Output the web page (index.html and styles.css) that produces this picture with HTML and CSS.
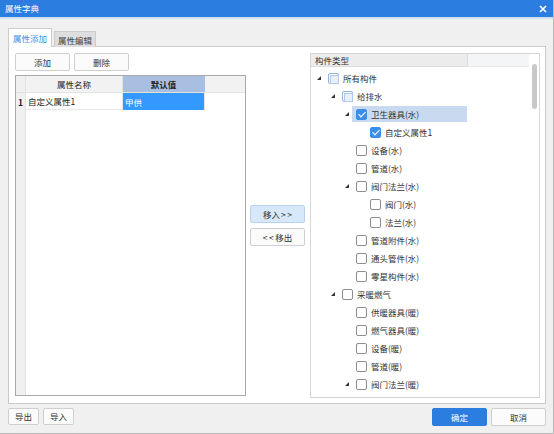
FILE: index.html
```html
<!DOCTYPE html>
<html>
<head>
<meta charset="utf-8">
<link rel="stylesheet" href="styles.css">
</head>
<body>
<div class="win">
  <div class="titlebar">
    <span class="title">属性字典</span>
    <svg class="close" width="8" height="8" viewBox="0 0 8 8"><path d="M1 1L7 7M7 1L1 7" stroke="#fff" stroke-width="1.6"/></svg>
  </div>
  <div class="main">
    <div class="tabs">
      <div class="tab active">属性添加</div>
      <div class="tab">属性编辑</div>
    </div>
    <div class="panel">
      <div class="leftcol">
        <div class="btnrow">
          <button class="btn w55">添加</button>
          <button class="btn w55">删除</button>
        </div>
        <div class="grid">
          <div class="grow ghead">
            <div class="c rn"></div>
            <div class="c name">属性名称</div>
            <div class="c def sel">默认值</div>
            <div class="c rest"></div>
          </div>
          <div class="grow gbody">
            <div class="c rn b">1</div>
            <div class="c name left">自定义属性1</div>
            <div class="c def val">甲供</div>
          </div>
          <div class="gfill"><div class="rnfill"></div></div>
        </div>
      </div>
      <div class="midcol">
        <button class="btn w55 blue-lite">移入<span class="arr r">&gt;&gt;</span></button>
        <button class="btn w55"><span class="arr l">&lt;&lt;</span>移出</button>
      </div>
      <div class="tree">
        <div class="treecontent">
          <div class="thead"><span class="thcell">构件类型</span><span class="threst"></span></div>
          <div class="row l0"><i class="tg"></i><i class="cb part"></i><span>所有构件</span></div>
          <div class="row l1"><i class="tg"></i><i class="cb part"></i><span>给排水</span></div>
          <div class="row l2"><i class="tg"></i><span class="hl"><i class="cb on"></i><span>卫生器具(水)</span></span></div>
          <div class="row l3"><i class="tg none"></i><i class="cb on"></i><span>自定义属性1</span></div>
          <div class="row l2"><i class="tg none"></i><i class="cb"></i><span>设备(水)</span></div>
          <div class="row l2"><i class="tg none"></i><i class="cb"></i><span>管道(水)</span></div>
          <div class="row l2"><i class="tg"></i><i class="cb"></i><span>阀门法兰(水)</span></div>
          <div class="row l3"><i class="tg none"></i><i class="cb"></i><span>阀门(水)</span></div>
          <div class="row l3"><i class="tg none"></i><i class="cb"></i><span>法兰(水)</span></div>
          <div class="row l2"><i class="tg none"></i><i class="cb"></i><span>管道附件(水)</span></div>
          <div class="row l2"><i class="tg none"></i><i class="cb"></i><span>通头管件(水)</span></div>
          <div class="row l2"><i class="tg none"></i><i class="cb"></i><span>零星构件(水)</span></div>
          <div class="row l1"><i class="tg"></i><i class="cb"></i><span>采暖燃气</span></div>
          <div class="row l2"><i class="tg none"></i><i class="cb"></i><span>供暖器具(暖)</span></div>
          <div class="row l2"><i class="tg none"></i><i class="cb"></i><span>燃气器具(暖)</span></div>
          <div class="row l2"><i class="tg none"></i><i class="cb"></i><span>设备(暖)</span></div>
          <div class="row l2"><i class="tg none"></i><i class="cb"></i><span>管道(暖)</span></div>
          <div class="row l2"><i class="tg"></i><i class="cb"></i><span>阀门法兰(暖)</span></div>
        </div>
        <div class="scrolltrack"><div class="thumb"></div></div>
      </div>
    </div>
    <div class="footer">
      <div class="fl">
        <button class="btn w31">导出</button>
        <button class="btn w31">导入</button>
      </div>
      <div class="fr">
        <button class="btn w55 primary">确定</button>
        <button class="btn w55">取消</button>
      </div>
    </div>
  </div>
</div>
</body>
</html>
```

FILE: styles.css
```css
* { box-sizing: border-box; }
html, body { margin: 0; padding: 0; }
body {
  width: 554px; height: 434px; overflow: hidden;
  font-family: "Noto Sans CJK SC", "Noto Sans", sans-serif;
  font-size: 8.5px; color: #222;
}
.win {
  width: 554px; height: 434px; background: #f0f0f0;
  border-right: 1px solid #b9b9b9; border-bottom: 1px solid #b9b9b9;
  display: flex; flex-direction: column;
}
.titlebar {
  height: 19px; background: #2b7de0; border-bottom: 2px solid #cfe0f6;
  display: flex; align-items: center; justify-content: space-between;
  padding: 0 6px 0 5px; flex: none;
}
.title { color: #fff; font-size: 8.5px; line-height: 1; }
.close { display: block; }
.main { flex: 1; display: flex; flex-direction: column; padding: 9px 7px 0 8px; }
.tabs { display: flex; align-items: flex-end; gap: 2px; height: 19px; flex: none; margin-bottom: -1px; position: relative; z-index: 1; }
.tab {
  height: 16px; padding: 0; background: #dedede; border: 1px solid #cdcdcd; border-bottom: none;
  display: flex; align-items: center; color: #444; width: 42px; justify-content: center;
  white-space: nowrap;
}
.tab.active { height: 19px; background: #fff; color: #3b8de6; width: 44px; border-color: #cdcdcd; }
.panel {
  height: 358px; background: #fff; border: 1px solid #cacaca;
  display: flex; flex: none;
}
.leftcol { width: 238px; padding: 6px 0 0 6px; display: flex; flex-direction: column; flex: none; }
.btnrow { display: flex; gap: 4px; height: 18px; }
.btn {
  font-family: inherit; font-size: 8.5px; color: #333; margin: 0; padding: 0;
  height: 18px; background: #fbfbfb; border: 1px solid #cfcfcf; border-radius: 2px;
  display: flex; align-items: center; justify-content: center; line-height: 1;
  white-space: nowrap;
}
.arr.r { letter-spacing: 1.5px; margin-left: 1px; margin-right: -1.5px; }
.arr.l { letter-spacing: 1.5px; margin-right: 0; }
.w55 { width: 55px; }
.w31 { width: 31px; height: 17px; }
.blue-lite { background: #d6e8fa; border-color: #b8d2ef; }
.primary { background: #2b7de0; border-color: #2b7de0; color: #fff; }
.grid {
  margin-top: 4px; width: 231px; height: 321px; border: 1px solid #a9a9a9;
  display: flex; flex-direction: column; overflow: hidden;
}
.grow { display: flex; flex: none; }
.ghead { height: 17px; background: #f2f2f2; border-bottom: 1px solid #e2e2e2; }
.gbody { height: 17px; }
.c { display: flex; align-items: center; justify-content: center; border-right: 1px solid #e2e2e2; }
.rn { width: 10px; background: #f0f0f0; }
.name { width: 97px; }
.def { width: 82px; }
.rest { flex: 1; border-right: none; }
.sel { background: #a9bfe1; font-weight: bold; border-right-color: #a9bfe1; }
.b { font-weight: bold; }
.left { justify-content: flex-start; padding-left: 2px; border-bottom: 1px solid #e8e8e8; }
.val { background: #3399ff; color: #fff; justify-content: flex-start; padding-left: 2px; }
.gfill { flex: 1; display: flex; }
.rnfill { width: 10px; background: #f0f0f0; border-right: 1px solid #e2e2e2; }
.midcol {
  width: 63px; flex: none; display: flex; flex-direction: column; align-items: flex-start;
  padding: 158px 0 0 3px; gap: 5px;
}
.tree {
  width: 230px; flex: none; margin-top: 6px; height: 345px;
  border: 1px solid #d6d6d6; display: flex; overflow: hidden;
}
.treecontent { flex: 1; display: flex; flex-direction: column; }
.thead { height: 13px; display: flex; flex: none; margin-bottom: 2px; }
.thcell {
  width: 157px; background: #ececec; border: 1px solid #dcdcdc; border-top: none; border-left: none;
  display: flex; align-items: center; padding-left: 4px; color: #333;
}
.threst { width: 61px; background: #f4f5f7; border-bottom: 1px solid #e8e8e8; }
.row { height: 18px; display: flex; align-items: center; flex: none; white-space: nowrap; color: #333; }
.l0 { padding-left: 4px; }
.l1 { padding-left: 18px; }
.l2 { padding-left: 32px; }
.l3 { padding-left: 46px; }
.tg {
  width: 13px; height: 18px; flex: none; position: relative;
}
.tg::after {
  content: ""; position: absolute; left: 2px; top: 7px;
  width: 0; height: 0; border-style: solid; border-width: 0 0 4px 4px;
  border-color: transparent transparent #333 transparent;
}
.tg.none::after { display: none; }
.cb {
  width: 11px; height: 11px; flex: none; border: 1px solid #8e8e8e; border-radius: 2px;
  background: #fff; margin-right: 4px; position: relative;
}
.cb.part { border-color: #8fb3df; }
.cb.part::after {
  content: ""; position: absolute; left: 1px; top: 1px; width: 7px; height: 7px;
  border: 1px solid #aecbee; background: #e6effa;
}
.cb.on { background: #3c8fe8; border-color: #3c8fe8; }
.cb.on::after {
  content: ""; position: absolute; left: 3px; top: 0px; width: 3px; height: 6px;
  border-right: 1.5px solid #fff; border-bottom: 1.5px solid #fff; transform: rotate(45deg);
}
.hl {
  display: flex; align-items: center; background: #c9daf0; height: 16px;
  margin-left: -4px; padding-left: 4px; width: 115px;
}
.scrolltrack { width: 10px; flex: none; padding: 10px 0 0 3px; }
.thumb { width: 5px; height: 45px; background: #c9c9c9; border-radius: 3px; }
.footer { flex: 1; display: flex; justify-content: space-between; padding-top: 4px; }
.fl, .fr { display: flex; gap: 4px; align-items: flex-start; }
```
